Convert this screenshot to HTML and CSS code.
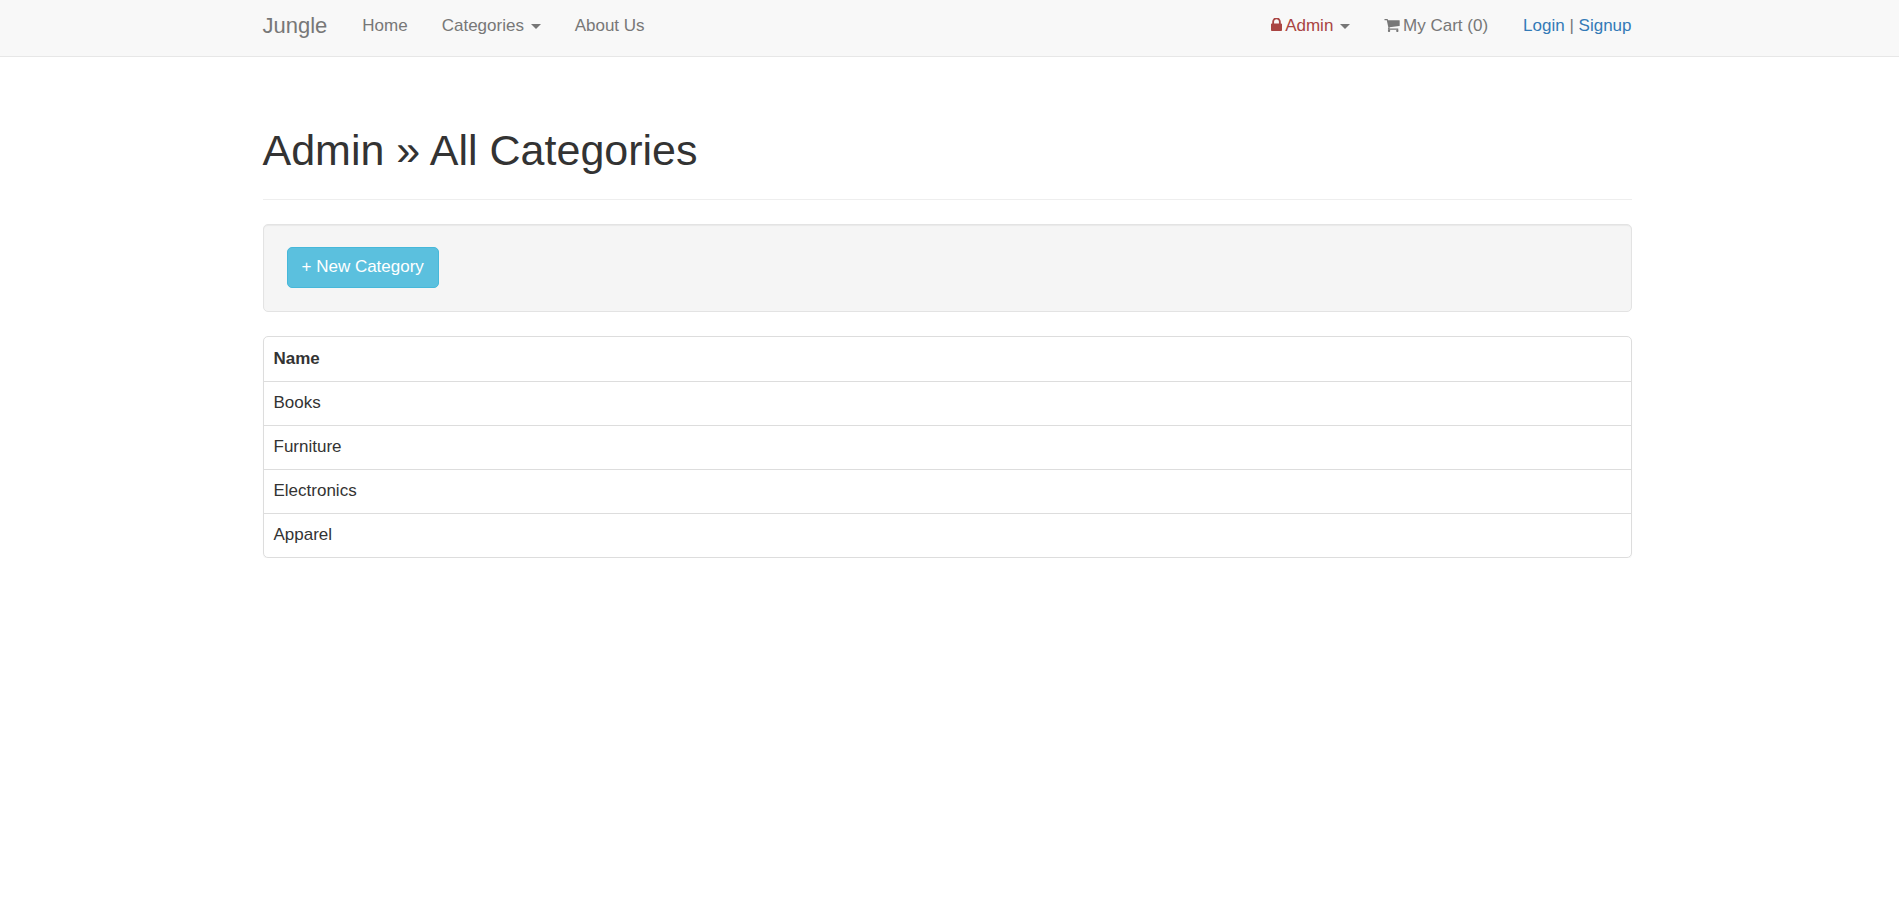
FILE: index.html
```html
<!DOCTYPE html>
<html lang="en">
<head>
<meta charset="utf-8">
<title>Jungle</title>
<link rel="stylesheet" href="styles.css">
</head>
<body>
<header class="navbar">
  <nav class="container navbar-inner">
    <a class="brand" href="#">Jungle</a>
    <ul class="nav">
      <li><a class="nav-link" href="#">Home</a></li>
      <li><a class="nav-link" href="#">Categories <span class="caret"></span></a></li>
      <li><a class="nav-link" href="#">About Us</a></li>
    </ul>
    <ul class="nav nav-right">
      <li><a class="nav-link" href="#"><span class="danger"><svg class="icon-lock" viewBox="320 192 1152 1344" aria-hidden="true"><path d="M640 768h512v-192q0-106-75-181t-181-75-181 75-75 181v192zm832 96v576q0 40-28 68t-68 28h-960q-40 0-68-28t-28-68v-576q0-40 28-68t68-28h32v-192q0-184 132-316t316-132 316 132 132 316v192h32q40 0 68 28t28 68z"/></svg>Admin</span> <span class="caret"></span></a></li>
      <li><a class="nav-link" href="#"><svg class="icon-cart" viewBox="64 256 1664 1408" aria-hidden="true"><path d="M704 1536q0 52-38 90t-90 38-90-38-38-90 38-90 90-38 90 38 38 90zm896 0q0 52-38 90t-90 38-90-38-38-90 38-90 90-38 90 38 38 90zm128-1088v512q0 24-16.500 42.500t-40.500 21.500l-1044 122q13 60 13 70 0 16-24 64h920q26 0 45 19t19 45-19 45-45 19h-1024q-26 0-45-19t-19-45q0-11 8-31.500t16-36 21.500-40 15.500-29.500l-177-823h-204q-26 0-45-19t-19-45 19-45 45-19h256q16 0 28.500 6.500t19.500 15.500 13 24.500 8 26 5.500 29.500 4.500 26h1201q26 0 45 19t19 45z"/></svg>My Cart (0)</a></li>
      <li class="nav-text"><a href="#">Login</a> | <a href="#">Signup</a></li>
    </ul>
  </nav>
</header>
<main class="container">
  <h1 class="page-header">Admin » All Categories</h1>
  <div class="well"><button class="btn" type="button">+ New Category</button></div>
  <div class="panel">
    <table class="table">
      <thead><tr><th scope="col">Name</th></tr></thead>
      <tbody>
        <tr><td>Books</td></tr>
        <tr><td>Furniture</td></tr>
        <tr><td>Electronics</td></tr>
        <tr><td>Apparel</td></tr>
      </tbody>
    </table>
  </div>
</main>
</body>
</html>
```
FILE: styles.css
```css
* { box-sizing: border-box; }

body {
  margin: 0;
  background: #fff;
  color: #333;
  font: 17px/24px "Liberation Sans", Arial, sans-serif;
}

a { color: #337ab7; text-decoration: none; }

.container {
  max-width: 1404px;
  margin: 0 auto;
  padding: 0 20px 0 15px;
}

.navbar {
  background: #f8f8f8;
  border-bottom: 1px solid #e7e7e7;
}

.navbar-inner { display: flex; }

.brand {
  padding: 14px 18px 18px 0;
  font-size: 22px;
  color: #777;
}

.nav {
  display: flex;
  margin: 0;
  padding: 0;
  list-style: none;
}

.nav-right { margin-left: auto; }

.nav-link {
  display: block;
  padding: 14px 17px 18px;
  color: #777;
}

.nav-text {
  padding: 14px 0 18px 18px;
  color: #777;
}

.danger { color: #a94442; }

.caret {
  display: inline-block;
  margin-left: 2px;
  vertical-align: middle;
  border-top: 5px solid #777;
  border-left: 5px solid transparent;
  border-right: 5px solid transparent;
}

.icon-lock, .icon-cart {
  height: 13px;
  margin-right: 3px;
  fill: currentColor;
}

.icon-lock { width: 11px; }
.icon-cart { width: 16px; vertical-align: -1px; }

.page-header {
  margin: 68px 0 24px;
  padding-bottom: 23px;
  border-bottom: 1px solid #eee;
  font-size: 43px;
  font-weight: 400;
  line-height: 51px;
}

.well {
  display: flex;
  margin-bottom: 24px;
  padding: 22px 23px 23px;
  background: #f5f5f5;
  border: 1px solid #e3e3e3;
  border-radius: 5px;
  box-shadow: inset 0 1px 1px rgba(0, 0, 0, .05);
}

.btn {
  padding: 7px 14px 8px;
  background: #5bc0de;
  border: 1px solid #46b8da;
  border-radius: 5px;
  color: #fff;
  font: inherit;
  cursor: pointer;
}

.panel {
  border: 1px solid #ddd;
  border-radius: 5px;
  box-shadow: 0 1px 1px rgba(0, 0, 0, .05);
}

.table {
  width: 100%;
  border-collapse: separate;
  border-spacing: 0;
}

.table th, .table td {
  padding: 9px 10px 10px;
  text-align: left;
}

.table th { padding-top: 10px; }

.table td { border-top: 1px solid #ddd; }
```
